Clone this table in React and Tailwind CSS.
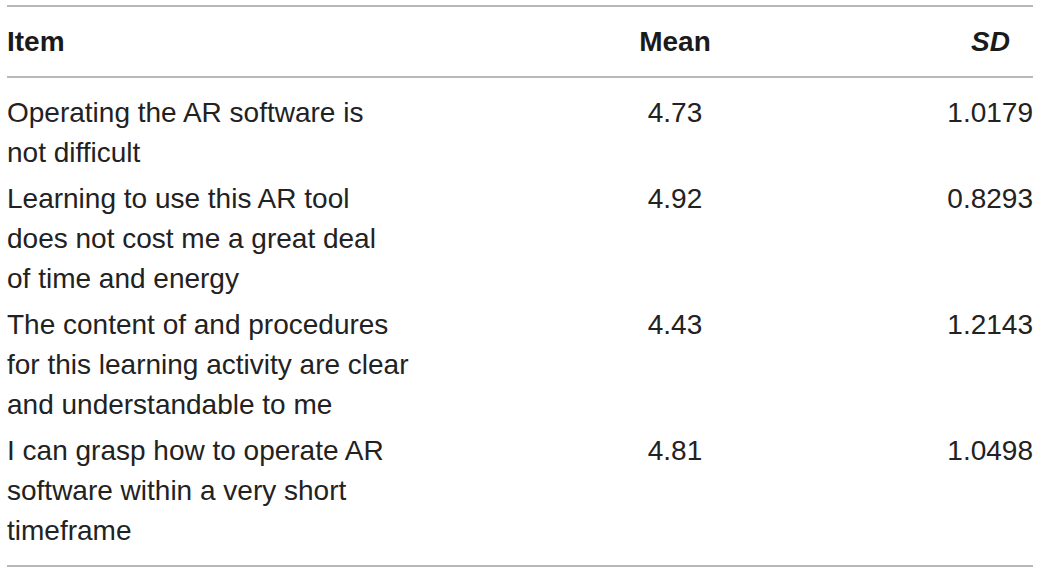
const rows = [
  { item: ['Operating the AR software is', 'not difficult'], mean: '4.73', sd: '1.0179' },
  { item: ['Learning to use this AR tool', 'does not cost me a great deal', 'of time and energy'], mean: '4.92', sd: '0.8293' },
  { item: ['The content of and procedures', 'for this learning activity are clear', 'and understandable to me'], mean: '4.43', sd: '1.2143' },
  { item: ['I can grasp how to operate AR', 'software within a very short', 'timeframe'], mean: '4.81', sd: '1.0498' },
];

export default function App() {
  return (
    <div className="min-h-screen bg-white px-[7px] pt-[5px] text-[28px] leading-[40px] text-[#222] font-['Liberation_Sans',Arial,sans-serif]">
      <div className="border-t-2 border-b-2 border-[#b8b8b8]">
        {/* header */}
        <div className="flex pt-[15px] pb-[14px] border-b-2 border-[#b8b8b8] font-bold text-[#1a1a1a]">
          <div className="w-[400px]">Item</div>
          <div className="w-[536px] text-center">Mean</div>
          <div className="flex-1 text-right pr-[23px] italic">SD</div>
        </div>

        <div className="pt-[12px] pb-[11px]">
          {rows.map((r) => (
            <div key={r.mean} className="flex py-[3px]">
              <div className="w-[400px] whitespace-nowrap">
                {r.item.map((line) => (
                  <div key={line}>{line}</div>
                ))}
              </div>
              <div className="w-[536px] text-center">{r.mean}</div>
              <div className="flex-1 text-right">{r.sd}</div>
            </div>
          ))}
        </div>
      </div>
    </div>
  );
}
